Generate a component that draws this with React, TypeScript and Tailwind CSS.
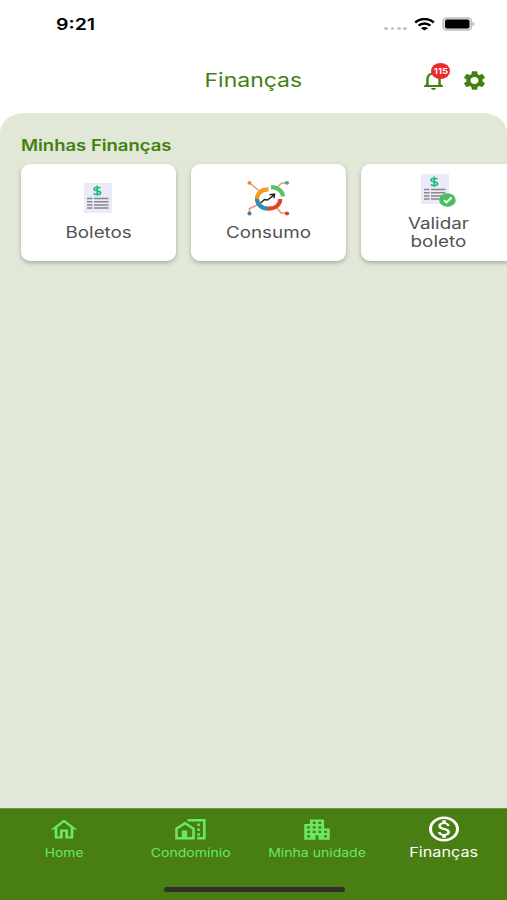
import type { ReactNode } from "react";
import {
  MdApartment,
  MdNotificationsNone,
  MdOutlineHome,
  MdOutlineMonetizationOn,
  MdSettings,
} from "react-icons/md";

function StatusBar() {
  return (
    <div className="flex h-[48px] items-center justify-between pr-[32px] pl-[55.500px] text-black">
      <span className="origin-left scale-x-[1.22] text-[16px] leading-[20px] font-semibold">9:21</span>
      <div className="flex items-center">
        <div className="mt-[9px] mr-[7px] flex gap-[2.500px]">
          {[0, 1, 2, 3].map((i) => (
            <i key={i} className="h-[3.500px] w-[3.800px] rounded-full bg-[#c6c6c6]" />
          ))}
        </div>
        <svg className="h-[13px] w-[21px]" viewBox="0 0 21 13" fill="none" stroke="currentColor" strokeWidth="2.5">
          <path d="M1.2 4.5C6.5-.1 14.500-.1 19.800 4.500M4.600 7.700c3.300-3 8.500-3 11.800 0" />
          <path d="M10.500 12.600 6.900 10.300c2-1.900 5.200-1.900 7.200 0z" fill="currentColor" stroke="none" />
        </svg>
        <svg className="ml-[6px] h-[14px] w-[34px]" viewBox="0 0 34 14">
          <rect x="2" y="1" width="28.500" height="12" rx="3.800" fill="#e4e4e4" stroke="#bdbdbd" strokeWidth="1.500" />
          <rect x="4" y="2.600" width="24.500" height="8.800" rx="2" fill="#000" />
          <path d="M31.500 4.500c2.600 1 2.600 4 0 5z" fill="#bdbdbd" />
        </svg>
      </div>
    </div>
  );
}

function Bill() {
  return (
    <svg className="h-[30px] w-[28px]" viewBox="0 0 28 30">
      <path d="M0 0h28v30H0z" fill="#eaebf7" />
      <path d="M16.300 5.300C15.500 4.200 10 3.600 10 6.200c0 2.200 6.600 1.200 6.600 3.600 0 2.500-6 2-6.800.6M13.200 2.500v10.300" fill="none" stroke="#22bd78" strokeWidth="1.700" />
      <path d="M3 15.500h5.500M10 15.500h14.500M3 18.700h5.500M10 18.700h14.500M3 21.900h5.500M10 21.900h14.500M3 25.100h5.500M10 25.100h14.500" stroke="#85868e" strokeWidth="1.500" />
    </svg>
  );
}

function ConsumptionIcon() {
  return (
    <svg className="h-[37px] w-[43px]" viewBox="0 0 43 37" fill="none">
      <g stroke="#f58b76" strokeWidth="1.400">
        <path d="m2.500 3 10 8M40 3h-5l-6 5M2.500 33v-4.500l9-4M40 33h-6l-5-6" />
      </g>
      <g strokeWidth="4.200">
        <path d="M21.500 9.300C14.500 9.300 10 13.500 10 19" stroke="#f8991d" />
        <path d="M10 19c0 5.500 5 9.600 11 9.600" stroke="#338bb5" />
        <path d="M21 28.600c7 0 12-3.500 12.300-9.600" stroke="#e5431e" />
        <path d="M24 7.200c7 0 11.500 4 12 9.200" stroke="#54c269" />
      </g>
      <path d="m13.500 23 4-3.500 3 .5 6.500-5M22.500 14.800l5-.7-.5 4" stroke="#222" strokeWidth="1.500" />
      <ellipse cx="2.500" cy="2.800" rx="2.100" ry="1.900" fill="#f18a22" />
      <ellipse cx="40" cy="2.800" rx="2.100" ry="1.900" fill="#49aa69" />
      <ellipse cx="2.500" cy="33.500" rx="2.100" ry="1.900" fill="#3c87a7" />
      <ellipse cx="40" cy="33.500" rx="2.100" ry="1.900" fill="#db402b" />
    </svg>
  );
}

function CondoIcon() {
  return (
    <svg className="h-[21px] w-[31px]" viewBox="0 0 31 21" fill="none" stroke="currentColor" strokeWidth="2.600">
      <path d="M1.500 19.200V9.600L10 4.200l8.500 5.400v9.600z" />
      <path d="M6.800 11.500h5.400v8H6.800z" fill="currentColor" stroke="none" />
      <path d="M12.500 1.300H29.300v17.900H22" />
      <path d="M23.600 4.600v2.500M23.600 9.400v2.500M23.600 14.200v2.500" strokeWidth="2.600" />
    </svg>
  );
}

function Card({ children }: { children: ReactNode }) {
  return (
    <div className="flex h-[97px] w-[154.500px] shrink-0 flex-col items-center rounded-[9px] bg-white text-center text-[15.700px] leading-[18.500px] text-[#505254] shadow-[0_2px_4px_rgba(60,75,70,0.36)]">
      {children}
    </div>
  );
}

export default function App() {
  return (
    <div className="flex h-[900px] w-[507px] flex-col overflow-hidden bg-white font-['Inter','Liberation_Sans',sans-serif]">
      <StatusBar />
      <header className="grid h-[65px] grid-cols-[1fr_auto_1fr] items-center text-[#43810f]">
        <span />
        <h1 className="scale-x-[1.21] text-[19px] leading-[24px]">Finanças</h1>
        <div className="flex items-center justify-end gap-[12.500px] pr-[19.500px]">
          <div className="relative -mt-[2px]">
            <MdNotificationsNone preserveAspectRatio="none" className="h-[24px] w-[29px]" />
            <span className="absolute -top-[5px] left-[12px] flex h-[16px] w-[19px] items-center justify-center rounded-[50%] bg-[#ee2a31] text-[8px] font-semibold text-white">
              <span className="scale-x-[1.2]">115</span>
            </span>
          </div>
          <MdSettings preserveAspectRatio="none" className="-mt-px h-[23px] w-[27px]" />
        </div>
      </header>
      <main className="min-h-0 flex-1 rounded-t-[24px_20px] bg-[#e2e8d8] pt-[22px] pl-[21px]">
        <h2 className="-ml-[0.500px] w-fit origin-left scale-x-[1.2] text-[15.400px] leading-[22px] font-semibold text-[#43810f]">
          Minhas Finanças
        </h2>
        <div className="mt-[6.500px] flex gap-[15.500px]">
          <Card>
            <div className="mt-[19.500px]"><Bill /></div>
            <span className="mt-[10.500px] scale-x-[1.2]">Boletos</span>
          </Card>
          <Card>
            <div className="mt-[16px]"><ConsumptionIcon /></div>
            <span className="mt-[7px] scale-x-[1.2]">Consumo</span>
          </Card>
          <Card>
            <div className="relative mt-[10px] mr-[7px]">
              <Bill />
              <svg className="absolute top-[19px] left-[18px] h-[14px] w-[17px]" viewBox="0 0 17 14">
                <ellipse cx="8.500" cy="7" rx="8.300" ry="6.800" fill="#4dbe5d" />
                <path d="m5 7.200 2.500 2.200L12.500 4.500" fill="none" stroke="#fff" strokeWidth="2" />
              </svg>
            </div>
            <span className="mt-[11px] scale-x-[1.2]">
              Validar
              <br />
              boleto
            </span>
          </Card>
        </div>
      </main>
      <nav className="flex h-[92px] shrink-0 flex-col items-center border-t border-[#739457] bg-[#487e12]">
        <div className="grid h-[78px] w-full grid-cols-4 pl-px text-[11.500px] leading-[16px] text-[#69e765]">
          <div className="flex flex-col items-center pt-[6.500px]">
            <MdOutlineHome preserveAspectRatio="none" className="h-[27px] w-[32px]" />
            <span className="mt-[2px] scale-x-[1.2]">Home</span>
          </div>
          <div className="flex flex-col items-center pt-[10px]">
            <CondoIcon />
            <span className="mt-[4.500px] scale-x-[1.22]">Condomínio</span>
          </div>
          <div className="flex flex-col items-center pt-[6.500px]">
            <MdApartment preserveAspectRatio="none" className="h-[27px] w-[34px]" />
            <span className="mt-[2px] scale-x-[1.22] whitespace-nowrap">Minha unidade</span>
          </div>
          <div className="flex flex-col items-center pt-[5px] text-white">
            <MdOutlineMonetizationOn preserveAspectRatio="none" className="h-[30px] w-[36px]" />
            <span className="scale-x-[1.2] text-[13.500px]">Finanças</span>
          </div>
        </div>
        <div className="ml-px h-[5px] w-[181px] rounded-full bg-[#2d302c]" />
      </nav>
    </div>
  );
}
